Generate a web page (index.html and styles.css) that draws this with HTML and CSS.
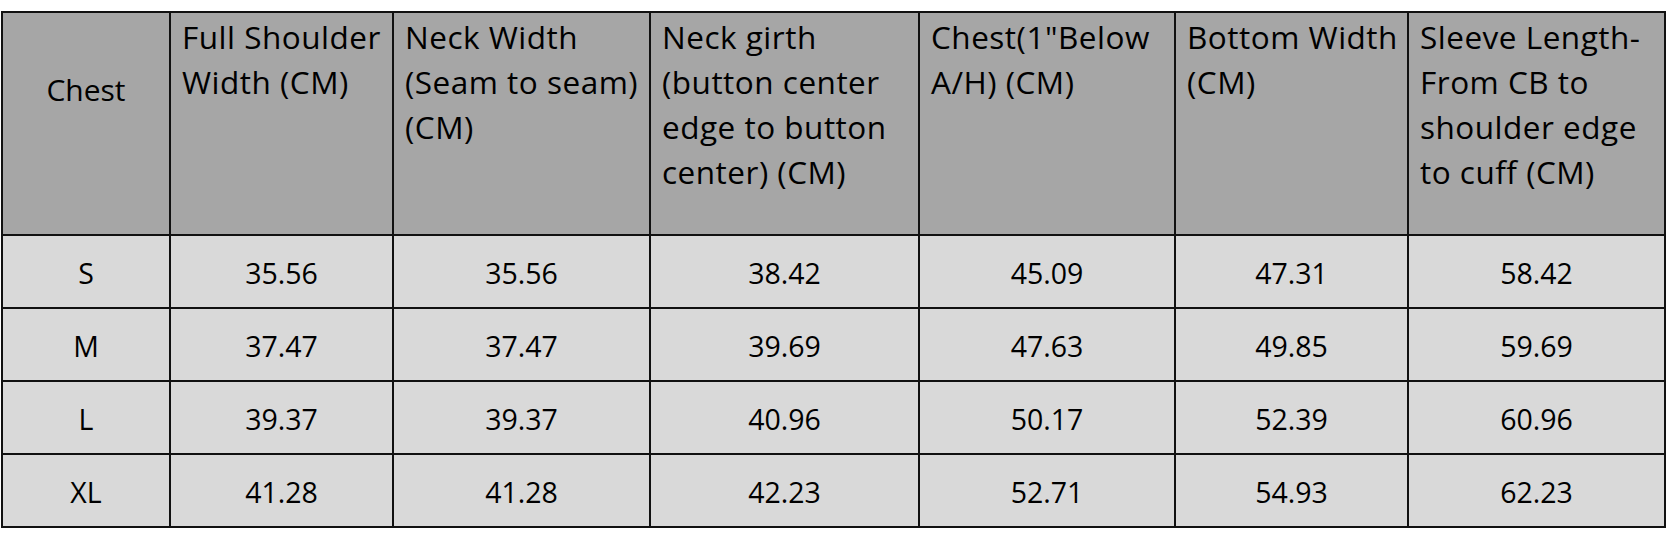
FILE: index.html
```html
<!DOCTYPE html>
<html lang="en">
<head>
<meta charset="utf-8">
<title>Size Chart</title>
<link rel="stylesheet" href="styles.css">
</head>
<body>
<div class="page">
  <table class="size-chart">
    <colgroup>
      <col class="c-size">
      <col class="c-shoulder">
      <col class="c-neck">
      <col class="c-girth">
      <col class="c-chest">
      <col class="c-bottom">
      <col class="c-sleeve">
    </colgroup>
    <thead>
      <tr class="head-row">
        <th class="h-size">Chest</th>
        <th>Full Shoulder<br>Width (CM)</th>
        <th>Neck Width<br>(Seam to seam)<br>(CM)</th>
        <th>Neck girth<br>(button center<br>edge to button<br>center) (CM)</th>
        <th>Chest(1"Below<br>A/H) (CM)</th>
        <th>Bottom Width<br>(CM)</th>
        <th>Sleeve Length-<br>From CB to<br>shoulder edge<br>to cuff (CM)</th>
      </tr>
    </thead>
    <tbody>
      <tr><td>S</td><td>35.56</td><td>35.56</td><td>38.42</td><td>45.09</td><td>47.31</td><td>58.42</td></tr>
      <tr><td>M</td><td>37.47</td><td>37.47</td><td>39.69</td><td>47.63</td><td>49.85</td><td>59.69</td></tr>
      <tr><td>L</td><td>39.37</td><td>39.37</td><td>40.96</td><td>50.17</td><td>52.39</td><td>60.96</td></tr>
      <tr><td>XL</td><td>41.28</td><td>41.28</td><td>42.23</td><td>52.71</td><td>54.93</td><td>62.23</td></tr>
    </tbody>
  </table>
</div>
</body>
</html>
```

FILE: styles.css
```css
html, body {
  margin: 0;
  padding: 0;
  background: #ffffff;
}

.page {
  padding: 11px 0 0 1px;
}

.size-chart {
  border-collapse: collapse;
  table-layout: fixed;
  width: 1665px;
  font-family: "Open Sans", "Liberation Sans", sans-serif;
  color: #000000;
}

.c-size { width: 168px; }
.c-shoulder { width: 223px; }
.c-neck { width: 257px; }
.c-girth { width: 269px; }
.c-chest { width: 256px; }
.c-bottom { width: 233px; }
.c-sleeve { width: 257px; }

.size-chart th,
.size-chart td {
  border: 2px solid #111111;
  padding: 0;
}

.head-row {
  height: 223px;
}

.size-chart th {
  background: #a6a6a6;
  font-weight: normal;
  font-size: 31.5px;
  letter-spacing: 0.5px;
  line-height: 45px;
  text-align: left;
  vertical-align: top;
  padding: 1px 0 0 11px;
  white-space: nowrap;
  overflow: hidden;
}

.size-chart th.h-size {
  text-align: center;
  font-size: 30px;
  letter-spacing: 0;
  padding: 54px 0 0 0;
}

.size-chart tbody tr {
  height: 73px;
}

.size-chart td {
  background: #d9d9d9;
  font-size: 28.5px;
  text-align: center;
  vertical-align: middle;
  padding-top: 2px;
}
```
